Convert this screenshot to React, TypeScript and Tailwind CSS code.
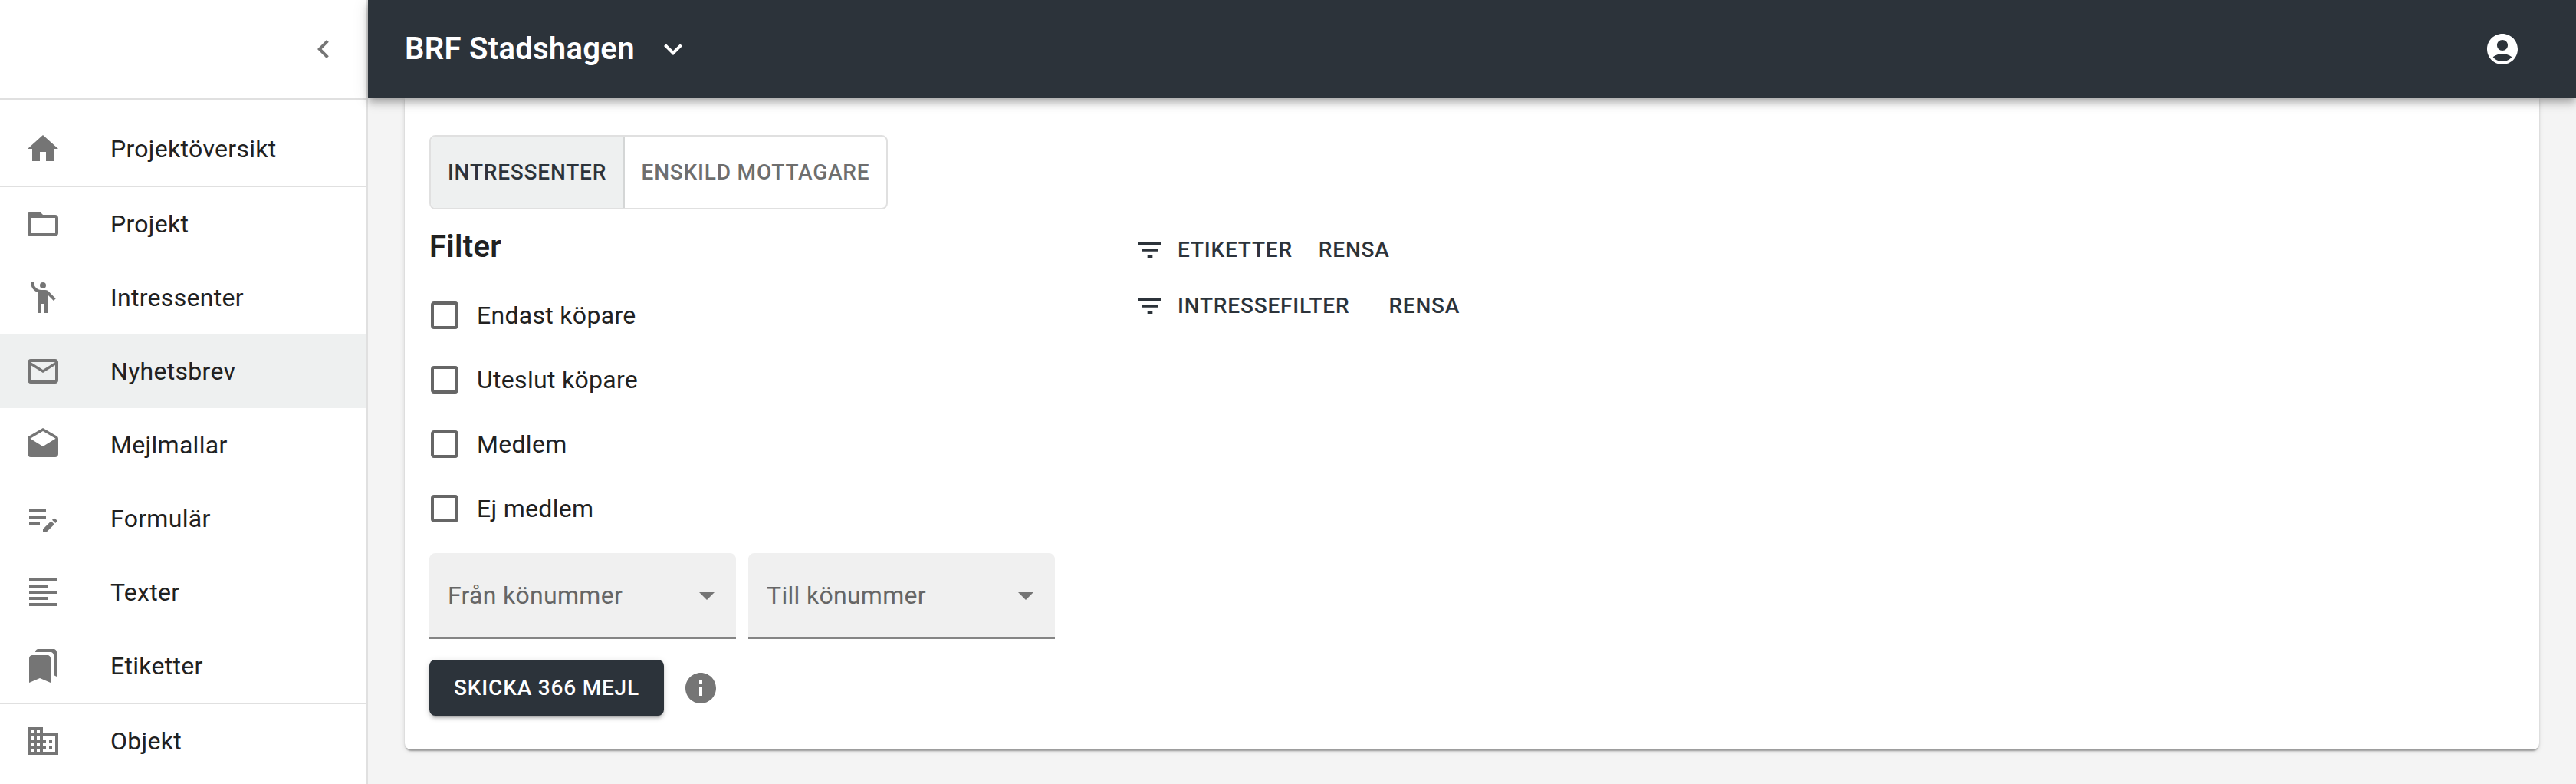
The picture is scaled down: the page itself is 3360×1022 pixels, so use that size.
const iconPaths = {
  home: 'M10 20v-6h4v6h5v-8h3L12 3 2 12h3v8z',
  folder: 'M20 6h-8l-2-2H4c-1.1 0-1.99.9-1.99 2L2 18c0 1.1.9 2 2 2h16c1.1 0 2-.9 2-2V8c0-1.1-.9-2-2-2zm0 12H4V8h16v10z',
  people: 'M10 4a2 2 0 1 0 4 0a2 2 0 1 0-4 0zM15.89 8.11C15.5 7.72 14.83 7 13.53 7h-2.54C8.24 6.99 6 4.75 6 2H4c0 3.16 2.11 5.84 5 6.71V22h2v-6h2v6h2V10.05L18.95 14l1.41-1.41-4.47-4.48z',
  mail: 'M20 4H4c-1.1 0-1.99.9-1.99 2L2 18c0 1.1.9 2 2 2h16c1.1 0 2-.9 2-2V6c0-1.1-.9-2-2-2zm0 14H4V8l8 5 8-5v10zm-8-7L4 6h16l-8 5z',
  drafts: 'M21.99 8c0-.72-.37-1.35-.94-1.7L12 1 2.95 6.3C2.38 6.65 2 7.28 2 8v10c0 1.1.9 2 2 2h16c1.1 0 2-.9 2-2l-.01-10zM12 13L3.74 7.84 12 3l8.26 4.84L12 13z',
  editNote: 'M3 10h11v2H3v-2zm0-2h11V6H3v2zm0 8h7v-2H3v2zm15.01-3.13l.71-.71c.39-.39 1.02-.39 1.41 0l.71.71c.39.39.39 1.02 0 1.41l-.71.71-2.12-2.12zm-.71.71l-5.3 5.3V21h2.12l5.3-5.3-2.12-2.12z',
  alignLeft: 'M15 15H3v2h12v-2zm0-8H3v2h12V7zM3 13h18v-2H3v2zm0 8h18v-2H3v2zM3 3v2h18V3H3z',
  bookmarks: 'M19 18l2 1V3c0-1.1-.9-2-2-2H8.99C7.89 1 7 1.9 7 3h10c1.1 0 2 .9 2 2v13zM15 5H5c-1.1 0-2 .9-2 2v16l7-3 7 3V7c0-1.1-.9-2-2-2z',
  domain: 'M12 7V3H2v18h20V7H12zM6 19H4v-2h2v2zm0-4H4v-2h2v2zm0-4H4V9h2v2zm0-4H4V5h2v2zm4 12H8v-2h2v2zm0-4H8v-2h2v2zm0-4H8V9h2v2zm0-4H8V5h2v2zm10 12h-8v-2h2v-2h-2v-2h2v-2h-2V9h8v10zm-2-8h-2v2h2v-2zm0 4h-2v2h2v-2z',
  chevronLeft: 'M15.41 7.41 14 6l-6 6 6 6 1.41-1.41L10.83 12z',
  chevronDown: 'M7.41 8.59 12 13.17l4.59-4.58L18 10l-6 6-6-6 1.41-1.41z',
  account: 'M12 2C6.48 2 2 6.48 2 12s4.48 10 10 10 10-4.48 10-10S17.52 2 12 2zm0 4c1.93 0 3.5 1.57 3.5 3.5S13.93 13 12 13s-3.5-1.57-3.5-3.5S10.07 6 12 6zm0 14c-2.03 0-4.43-.82-6.14-2.88C7.55 15.8 9.68 15 12 15s4.45.8 6.14 2.12C16.43 19.18 14.03 20 12 20z',
  info: 'M12 2C6.48 2 2 6.48 2 12s4.48 10 10 10 10-4.48 10-10S17.52 2 12 2zm1 15h-2v-6h2v6zm0-8h-2V7h2v2z',
  dropDown: 'M7 10l5 5 5-5z',
  filter: 'M10 18h4v-2h-4v2zM3 6v2h18V6H3zm3 7h12v-2H6v2z',
  checkbox: 'M19 5v14H5V5h14m0-2H5c-1.1 0-2 .9-2 2v14c0 1.1.9 2 2 2h14c1.1 0 2-.9 2-2V5c0-1.1-.9-2-2-2z',
};

function Icon({ name, className }: { name: keyof typeof iconPaths; className: string }) {
  return (
    <svg viewBox="0 0 24 24" fill="currentColor" className={className}>
      <path d={iconPaths[name]} />
    </svg>
  );
}

const navGroups: { icon: keyof typeof iconPaths; label: string; active?: boolean }[][] = [
  [{ icon: 'home', label: 'Projektöversikt' }],
  [
    { icon: 'folder', label: 'Projekt' },
    { icon: 'people', label: 'Intressenter' },
    { icon: 'mail', label: 'Nyhetsbrev', active: true },
    { icon: 'drafts', label: 'Mejlmallar' },
    { icon: 'editNote', label: 'Formulär' },
    { icon: 'alignLeft', label: 'Texter' },
    { icon: 'bookmarks', label: 'Etiketter' },
  ],
  [{ icon: 'domain', label: 'Objekt' }],
];

const checks = ['Endast köpare', 'Uteslut köpare', 'Medlem', 'Ej medlem'];

function Sidebar() {
  return (
    <aside className="flex h-full w-[480px] shrink-0 flex-col overflow-hidden border-r-2 border-[#e0e0e0] bg-white">
      <div className="flex h-[128px] shrink-0 items-center justify-end pr-[32px]">
        <Icon name="chevronLeft" className="h-[48px] w-[48px] text-[#757575]" />
      </div>
      {navGroups.map((group, i) => (
        <div key={i} className={`shrink-0 border-t-2 border-[#e0e0e0] ${i === 0 ? 'pt-4' : ''}`}>
          {group.map((item) => (
            <div
              key={item.label}
              className={`flex h-[96px] items-center pl-8 ${item.active ? 'bg-[#eef0f0]' : ''}`}
            >
              <Icon name={item.icon} className="h-[48px] w-[48px] shrink-0 text-[#757575]" />
              <span className="ml-[64px] text-[32px] tracking-[0.00938em] text-[#212121]">{item.label}</span>
            </div>
          ))}
        </div>
      ))}
    </aside>
  );
}

function SelectField({ label }: { label: string }) {
  return (
    <div className="flex h-[112px] w-[400px] items-center justify-between rounded-t-[8px] border-b-2 border-[#858585] bg-[#f0f0f0] pl-6 pr-[14px]">
      <span className="text-[32px] tracking-[0.00938em] text-[#666666]">{label}</span>
      <Icon name="dropDown" className="h-[48px] w-[48px] text-[#757575]" />
    </div>
  );
}

export default function App() {
  return (
    <div className="flex h-[1022px] w-[3360px] overflow-hidden bg-[#f4f4f4] font-['Roboto',sans-serif]">
      <Sidebar />
      <main className="flex min-w-0 flex-1 flex-col">
        <header className="relative z-10 flex h-[128px] shrink-0 items-center justify-between bg-[#2c333a] pl-[48px] pr-[72px] text-white shadow-[0_4px_8px_-2px_rgba(0,0,0,0.2),0_8px_10px_0_rgba(0,0,0,0.14),0_2px_20px_0_rgba(0,0,0,0.12)]">
          <div className="flex items-center">
            <span className="text-[40px] font-semibold tracking-[0.0075em]">BRF Stadshagen</span>
            <Icon name="chevronDown" className="ml-[26px] h-[48px] w-[48px]" />
          </div>
          <Icon name="account" className="h-[48px] w-[48px]" />
        </header>
        <div className="px-[48px]">
          <section className="flex h-[849px] rounded-b-[8px] bg-white pl-[32px] pt-[48px] shadow-[0_4px_2px_-2px_rgba(0,0,0,0.2),0_2px_2px_0_rgba(0,0,0,0.14),0_2px_6px_0_rgba(0,0,0,0.12)]">
            <div className="w-[920px] shrink-0">
              <div className="flex h-[97px] w-[598px] rounded-[8px] border-2 border-[#e0e0e0] text-[28px] font-medium uppercase tracking-[0.02857em]">
                <div className="flex w-[253px] items-center justify-center rounded-l-[6px] border-r-2 border-[#d4d6d6] bg-[#eef0f0] text-[#2c333a]">
                  Intressenter
                </div>
                <div className="flex flex-1 items-center justify-center text-[#6e6e6e]">Enskild mottagare</div>
              </div>
              <h2 className="mb-[15px] mt-[17px] text-[40px] font-semibold leading-[64px] tracking-[0.0075em] text-[#212121]">
                Filter
              </h2>
              <div className="flex flex-col">
                {checks.map((label) => (
                  <label key={label} className="flex h-[84px] items-center">
                    <Icon name="checkbox" className="-ml-[4px] h-[48px] w-[48px] shrink-0 text-[#666666]" />
                    <span className="ml-[18px] text-[32px] tracking-[0.00938em] text-[#212121]">{label}</span>
                  </label>
                ))}
              </div>
              <div className="mt-[16px] flex gap-4">
                <SelectField label="Från könummer" />
                <SelectField label="Till könummer" />
              </div>
              <div className="mt-[27px] flex items-center">
                <button className="h-[73px] w-[306px] rounded-[8px] bg-[#2c333a] text-[28px] font-medium uppercase tracking-[0.02857em] text-white shadow-[0_6px_2px_-4px_rgba(0,0,0,0.2),0_4px_4px_0_rgba(0,0,0,0.14),0_2px_10px_0_rgba(0,0,0,0.12)]">
                  Skicka 366 mejl
                </button>
                <Icon name="info" className="ml-[24px] h-[48px] w-[48px] text-[#757575]" />
              </div>
            </div>
            <div className="pt-[113px] text-[28px] font-medium uppercase tracking-[0.02857em] text-[#2c333a]">
              <div className="flex h-[73px] items-center">
                <Icon name="filter" className="h-[40px] w-[40px]" />
                <span className="ml-[16px]">Etiketter</span>
                <span className="ml-[34px]">Rensa</span>
              </div>
              <div className="flex h-[73px] items-center">
                <Icon name="filter" className="h-[40px] w-[40px]" />
                <span className="ml-[16px]">Intressefilter</span>
                <span className="ml-[51px]">Rensa</span>
              </div>
            </div>
          </section>
        </div>
      </main>
    </div>
  );
}
